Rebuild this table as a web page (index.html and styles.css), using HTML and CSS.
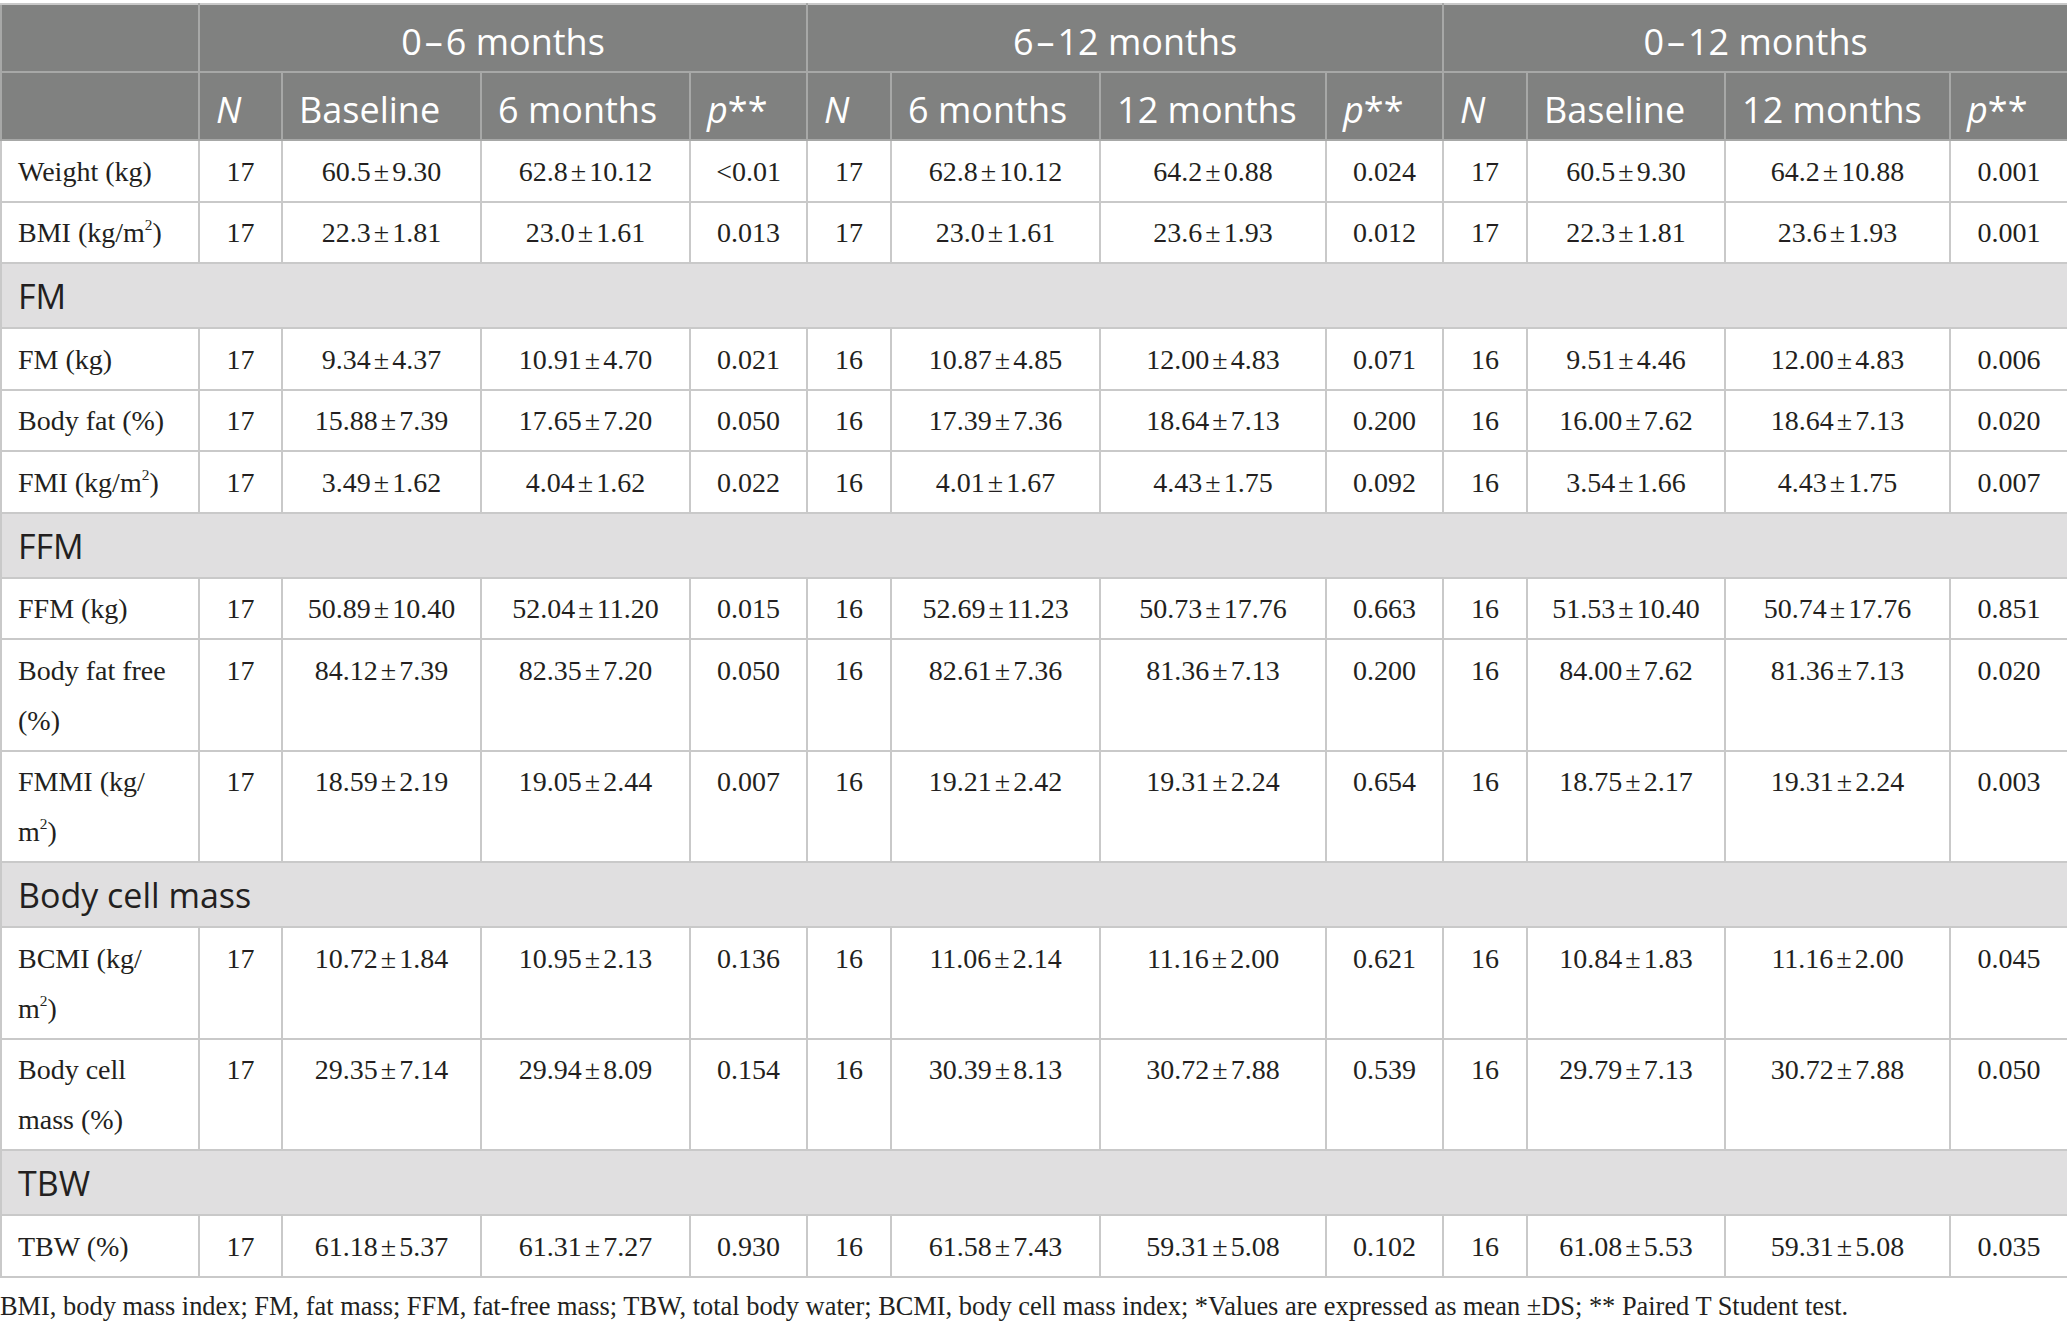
FILE: index.html
```html
<!DOCTYPE html>
<html lang="en">
<head>
<meta charset="utf-8">
<title>Body composition table</title>
<link rel="stylesheet" href="styles.css">
</head>
<body>
<div class="page">
<table class="data">
<colgroup>
<col class="c198"><col class="c83"><col class="c199"><col class="c209"><col class="c117">
<col class="c84"><col class="c209"><col class="c226"><col class="c117">
<col class="c84"><col class="c198"><col class="c225"><col class="c118">
</colgroup>
<thead>
<tr class="h1">
<th></th>
<th colspan="4">0<span class="dash">–</span>6 months</th>
<th colspan="4">6<span class="dash">–</span>12 months</th>
<th colspan="4">0<span class="dash">–</span>12 months</th>
</tr>
<tr class="h2">
<th></th>
<th><i>N</i></th><th>Baseline</th><th>6 months</th><th><i>p</i>**</th>
<th><i>N</i></th><th>6 months</th><th>12 months</th><th><i>p</i>**</th>
<th><i>N</i></th><th>Baseline</th><th>12 months</th><th><i>p</i>**</th>
</tr>
</thead>
<tbody>
<tr><td>Weight (kg)</td><td>17</td><td>60.5 ± 9.30</td><td>62.8 ± 10.12</td><td>&lt;0.01</td><td>17</td><td>62.8 ± 10.12</td><td>64.2 ± 0.88</td><td>0.024</td><td>17</td><td>60.5 ± 9.30</td><td>64.2 ± 10.88</td><td>0.001</td></tr>
<tr><td>BMI (kg/m<sup>2</sup>)</td><td>17</td><td>22.3 ± 1.81</td><td>23.0 ± 1.61</td><td>0.013</td><td>17</td><td>23.0 ± 1.61</td><td>23.6 ± 1.93</td><td>0.012</td><td>17</td><td>22.3 ± 1.81</td><td>23.6 ± 1.93</td><td>0.001</td></tr>
<tr class="group"><td colspan="13">FM</td></tr>
<tr><td>FM (kg)</td><td>17</td><td>9.34 ± 4.37</td><td>10.91 ± 4.70</td><td>0.021</td><td>16</td><td>10.87 ± 4.85</td><td>12.00 ± 4.83</td><td>0.071</td><td>16</td><td>9.51 ± 4.46</td><td>12.00 ± 4.83</td><td>0.006</td></tr>
<tr><td>Body fat (%)</td><td>17</td><td>15.88 ± 7.39</td><td>17.65 ± 7.20</td><td>0.050</td><td>16</td><td>17.39 ± 7.36</td><td>18.64 ± 7.13</td><td>0.200</td><td>16</td><td>16.00 ± 7.62</td><td>18.64 ± 7.13</td><td>0.020</td></tr>
<tr><td>FMI (kg/m<sup>2</sup>)</td><td>17</td><td>3.49 ± 1.62</td><td>4.04 ± 1.62</td><td>0.022</td><td>16</td><td>4.01 ± 1.67</td><td>4.43 ± 1.75</td><td>0.092</td><td>16</td><td>3.54 ± 1.66</td><td>4.43 ± 1.75</td><td>0.007</td></tr>
<tr class="group"><td colspan="13">FFM</td></tr>
<tr><td>FFM (kg)</td><td>17</td><td>50.89 ± 10.40</td><td>52.04 ± 11.20</td><td>0.015</td><td>16</td><td>52.69 ± 11.23</td><td>50.73 ± 17.76</td><td>0.663</td><td>16</td><td>51.53 ± 10.40</td><td>50.74 ± 17.76</td><td>0.851</td></tr>
<tr><td>Body fat free<br>(%)</td><td>17</td><td>84.12 ± 7.39</td><td>82.35 ± 7.20</td><td>0.050</td><td>16</td><td>82.61 ± 7.36</td><td>81.36 ± 7.13</td><td>0.200</td><td>16</td><td>84.00 ± 7.62</td><td>81.36 ± 7.13</td><td>0.020</td></tr>
<tr><td>FMMI (kg/<br>m<sup>2</sup>)</td><td>17</td><td>18.59 ± 2.19</td><td>19.05 ± 2.44</td><td>0.007</td><td>16</td><td>19.21 ± 2.42</td><td>19.31 ± 2.24</td><td>0.654</td><td>16</td><td>18.75 ± 2.17</td><td>19.31 ± 2.24</td><td>0.003</td></tr>
<tr class="group"><td colspan="13">Body cell mass</td></tr>
<tr><td>BCMI (kg/<br>m<sup>2</sup>)</td><td>17</td><td>10.72 ± 1.84</td><td>10.95 ± 2.13</td><td>0.136</td><td>16</td><td>11.06 ± 2.14</td><td>11.16 ± 2.00</td><td>0.621</td><td>16</td><td>10.84 ± 1.83</td><td>11.16 ± 2.00</td><td>0.045</td></tr>
<tr><td>Body cell<br>mass (%)</td><td>17</td><td>29.35 ± 7.14</td><td>29.94 ± 8.09</td><td>0.154</td><td>16</td><td>30.39 ± 8.13</td><td>30.72 ± 7.88</td><td>0.539</td><td>16</td><td>29.79 ± 7.13</td><td>30.72 ± 7.88</td><td>0.050</td></tr>
<tr class="group"><td colspan="13">TBW</td></tr>
<tr><td>TBW (%)</td><td>17</td><td>61.18 ± 5.37</td><td>61.31 ± 7.27</td><td>0.930</td><td>16</td><td>61.58 ± 7.43</td><td>59.31 ± 5.08</td><td>0.102</td><td>16</td><td>61.08 ± 5.53</td><td>59.31 ± 5.08</td><td>0.035</td></tr>
</tbody>
</table>
<p class="note">BMI, body mass index; FM, fat mass; FFM, fat-free mass; TBW, total body water; BCMI, body cell mass index; *Values are expressed as mean ±DS; ** Paired T Student test.</p>
</div>
</body>
</html>
```
FILE: styles.css
```css
html, body {
  margin: 0;
  padding: 0;
  background: #ffffff;
}
.page {
  padding-top: 3px;
  width: 2067px;
}
.data {
  width: 2067px;
  table-layout: fixed;
  border-collapse: collapse;
  font-family: "Liberation Serif", "Times New Roman", serif;
  font-size: 28px;
  color: #231f20;
}
.c198 { width: 198px; }
.c83 { width: 83px; }
.c199 { width: 199px; }
.c209 { width: 209px; }
.c117 { width: 117px; }
.c84 { width: 84px; }
.c226 { width: 226px; }
.c225 { width: 225px; }
.c118 { width: 118px; }

.data th {
  background: #808180;
  color: #ffffff;
  font-family: "Open Sans", "Noto Sans", sans-serif;
  font-weight: 400;
  font-size: 36px;
  line-height: 50px;
  padding: 12px 8px 4px 16px;
  border: 2px solid #a7a8a7;
  text-align: left;
  white-space: nowrap;
}
.data thead tr:first-child th {
  border-top-color: #c9c9c9;
}
.data .h1 th {
  text-align: center;
  padding-left: 8px;
}
.dash {
  margin: 0 3px;
}
.data td {
  border: 2px solid #c9c9c9;
  line-height: 50px;
  padding: 5.5px 10px 4px 10px;
  text-align: center;
  vertical-align: top;
  word-spacing: -4px;
}
.data td:first-child {
  text-align: left;
  padding-left: 16px;
  word-spacing: 0;
}
.data .group td {
  background: #e0dfe0;
  font-family: "Open Sans", "Noto Sans", sans-serif;
  font-size: 34px;
  color: #231f20;
  padding: 7px 10px 6px 16px;
}
sup {
  font-size: 0.55em;
  line-height: 0;
  vertical-align: 0.75em;
}
.note {
  margin: 8px 0 0 0;
  font-family: "Liberation Serif", "Times New Roman", serif;
  font-size: 26.4px;
  line-height: 40px;
  color: #231f20;
}
```
